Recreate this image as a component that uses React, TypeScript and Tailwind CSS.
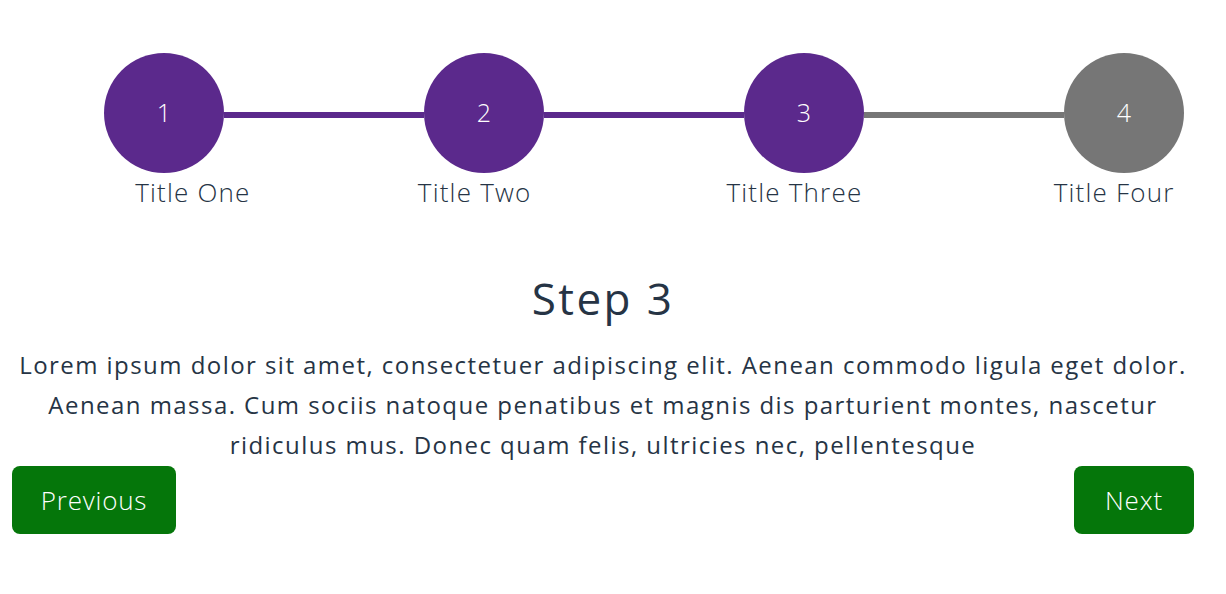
import React from 'react';

const steps = [
  { n: 1, title: 'Title One' },
  { n: 2, title: 'Title Two' },
  { n: 3, title: 'Title Three' },
  { n: 4, title: 'Title Four' },
];

const current = 3;

export default function App() {
  return (
    <div
      className="w-[1206px] px-3 pt-[53px] bg-white text-[#263445]"
      style={{ fontFamily: '"Open Sans", Lato, sans-serif' }}
    >
      {/* circles + connectors */}
      <div className="flex items-center pl-[92px]">
        {steps.map((s, i) => (
          <React.Fragment key={s.n}>
            {i > 0 && (
              <div
                className={`w-[200px] h-[6px] mt-[4px] ${
                  s.n <= current ? 'bg-[#5b298c]' : 'bg-[#767676]'
                }`}
              />
            )}
            <div
              className={`w-[120px] h-[120px] rounded-full flex items-center justify-center text-white text-[25px] font-light ${
                s.n <= current ? 'bg-[#5b298c]' : 'bg-[#767676]'
              }`}
            >
              {s.n}
            </div>
          </React.Fragment>
        ))}
      </div>

      {/* labels */}
      <div className="flex mt-[4px] text-[26px] leading-[30px] font-light tracking-[1.2px]">
        <div className="w-[160px] ml-[101px] text-center">Title One</div>
        <div className="w-[160px] ml-[122px] text-center">Title Two</div>
        <div className="w-[160px] ml-[160px] text-center">Title Three</div>
        <div className="w-[160px] ml-[160px] text-center">Title Four</div>
      </div>

      <h1 className="mt-[65px] text-center text-[44px] leading-[52px] tracking-[2.4px]">Step 3</h1>

      <p className="mt-[21px] text-center text-[24px] leading-[40px] tracking-[1.45px]">
        Lorem ipsum dolor sit amet, consectetuer adipiscing elit. Aenean commodo ligula eget dolor.
        <br />
        Aenean massa. Cum sociis natoque penatibus et magnis dis parturient montes, nascetur
        <br />
        ridiculus mus. Donec quam felis, ultricies nec, pellentesque
      </p>

      <div className="flex justify-between mt-[1px]">
        <button className="h-[68px] w-[164px] rounded-lg bg-[#05760a] text-white text-[26px] font-light tracking-[0.8px]">
          Previous
        </button>
        <button className="h-[68px] w-[120px] rounded-lg bg-[#05760a] text-white text-[26px] font-light tracking-[0.8px]">
          Next
        </button>
      </div>
    </div>
  );
}
